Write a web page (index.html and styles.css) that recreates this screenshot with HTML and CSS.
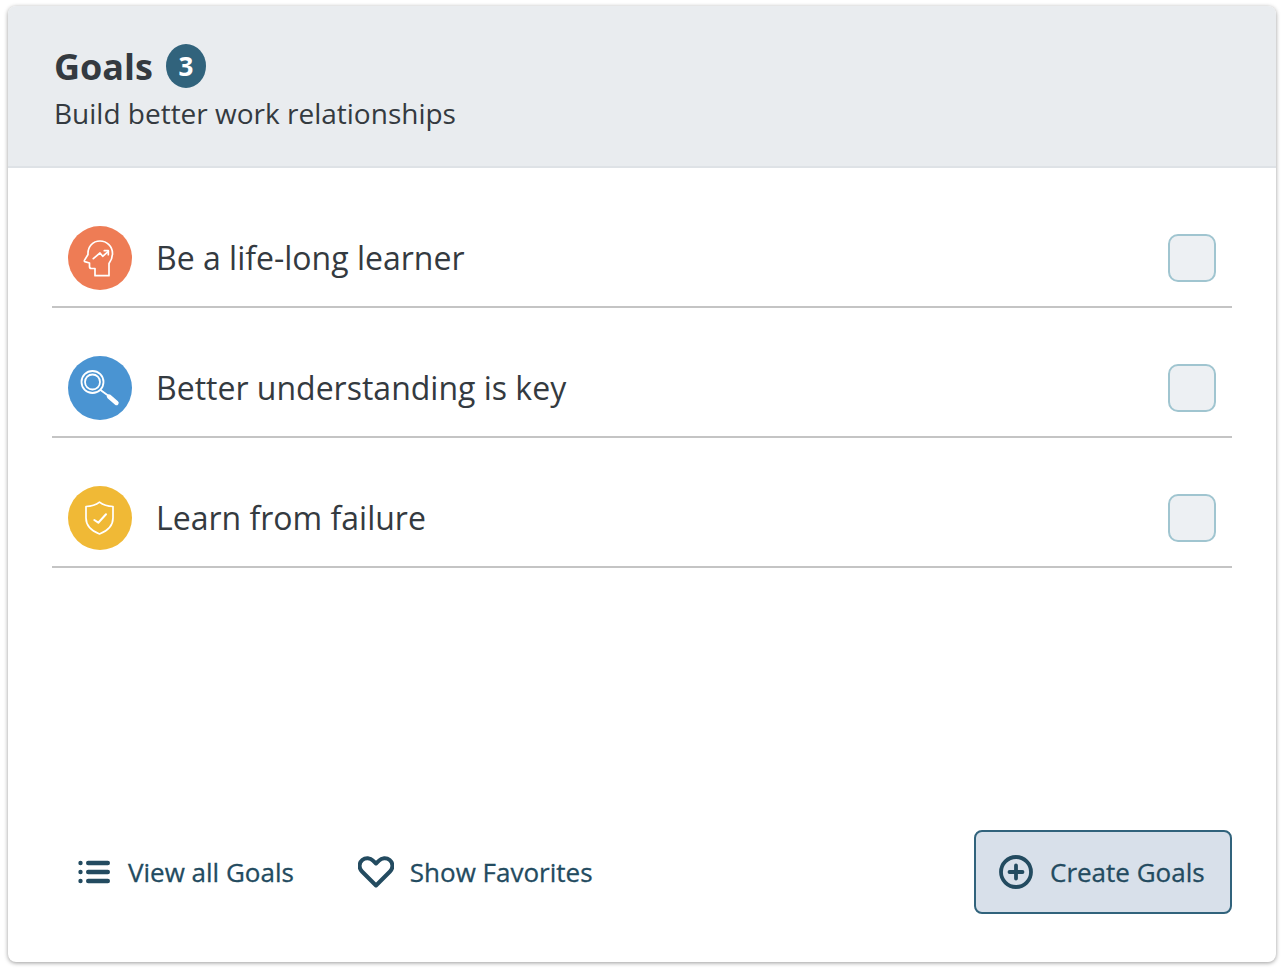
FILE: index.html
```html
<!DOCTYPE html>
<html lang="en">

<head>
    <meta charset="UTF-8" />
    <meta name="viewport" content="width=device-width, initial-scale=1.0" />
    <title>Goals</title>
    <link rel="stylesheet" href="styles.css">
</head>

<body>
    <div class="goals-card">
        <div class="goals-header">
            <div class="goals-title-row">
                <h2 class="goals-title">Goals</h2>
                <span class="goals-count">3</span>
            </div>
            <div class="goals-subtitle">Build better work relationships</div>
        </div>

        <ul class="goals-list">
            <li class="goal-row">
                <span class="goal-icon orange">
                    <svg width="36" height="38" viewBox="0 0 36 38" fill="none" stroke="#fff" stroke-width="1.700" stroke-linejoin="round" stroke-linecap="round">
                        <path d="M13 36.700V29.500H9.500a2 2 0 0 1-2-2V24l-4.700-1.400a.8.800 0 0 1-.4-1.200L6 15.500C5.500 7.500 11 2 18 2 25 2 30.500 7.500 30.500 14.500c0 4.500-1.700 7.500-3.500 10v12.200z" />
                        <path d="M11.300 19.700L18 14l2.700 3.300 5.600-5" />
                        <path d="M22.300 11.700h4v4" />
                    </svg>
                </span>
                <span class="goal-name">Be a life-long learner</span>
                <span class="goal-check"></span>
            </li>
            <li class="goal-row">
                <span class="goal-icon blue">
                    <svg width="40" height="40" viewBox="0 0 40 40" fill="none" stroke="#fff" stroke-linecap="round">
                        <circle cx="12.500" cy="14" r="11" stroke-width="1.800" />
                        <circle cx="12.500" cy="14" r="7.500" stroke-width="1.800" />
                        <path d="M20.500 22l7.500 5.500" stroke-width="1.800" />
                        <path d="M29 28.500l7.500 6.500" stroke-width="4.400" />
                    </svg>
                </span>
                <span class="goal-name">Better understanding is key</span>
                <span class="goal-check"></span>
            </li>
            <li class="goal-row">
                <span class="goal-icon yellow">
                    <svg width="36" height="36" viewBox="0 0 36 36" fill="none" stroke="#fff" stroke-width="1.700" stroke-linejoin="round" stroke-linecap="round">
                        <path d="M17.500 2.200C21 5 26 6.500 31 6.500V18c0 8-6 13-13.500 16C10 31 4 26 4 18V6.500C9 6.500 14 5 17.500 2.200z" />
                        <path d="M12.300 20l4 2.700 7.700-8.400" stroke-width="2" />
                    </svg>
                </span>
                <span class="goal-name">Learn from failure</span>
                <span class="goal-check"></span>
            </li>
        </ul>

        <div class="goals-footer">
            <a class="footer-link list-link" href="#">
                <svg width="32" height="24" viewBox="0 0 32 24" fill="#234b60">
                    <circle cx="2.500" cy="3" r="2.200" />
                    <circle cx="2.500" cy="12" r="2.200" />
                    <circle cx="2.500" cy="21" r="2.200" />
                    <rect x="8" y=".8" width="24" height="4.400" rx="2.200" />
                    <rect x="8" y="9.800" width="24" height="4.400" rx="2.200" />
                    <rect x="8" y="18.800" width="24" height="4.400" rx="2.200" />
                </svg>
                View all Goals
            </a>
            <a class="footer-link heart-link" href="#">
                <svg width="36" height="32" viewBox="0 0 36 32" fill="none" stroke="#234b60" stroke-width="4" stroke-linejoin="round">
                    <path d="M18 29.500L4 15.500C.5 12 1 6.800 4.300 4c3.300-2.700 8-2.200 10.700.6L18 7.500l3-2.900c2.700-2.800 7.400-3.300 10.700-.6C35 6.800 35.500 12 32 15.500z" />
                </svg>
                Show Favorites
            </a>
            <button class="create-button">
                <svg width="34" height="34" viewBox="0 0 34 34" fill="none" stroke="#234b60" stroke-linecap="round">
                    <circle cx="17" cy="17" r="15" stroke-width="3.800" />
                    <path d="M17 10.500v13M10.500 17h13" stroke-width="3.800" />
                </svg>
                Create Goals
            </button>
        </div>
    </div>
</body>

</html>
```

FILE: styles.css
```css
body {
    font-family: "Open Sans", Arial, sans-serif;
    margin: 0;
    padding: 6px 8px 10px 8px;
    background-color: white;
    color: #343a40;
}

.goals-card {
    height: 956px;
    display: flex;
    flex-direction: column;
    box-sizing: border-box;
    background-color: white;
    border-radius: 8px;
    box-shadow: 0 1px 4px rgba(0, 0, 0, 0.4);
    overflow: hidden;
}

.goals-header {
    box-sizing: border-box;
    height: 162px;
    padding: 37px 47px 0 46px;
    background-color: #e9ecef;
    border-bottom: 2px solid #dee2e6;
}

.goals-title-row {
    display: flex;
    align-items: center;
    gap: 13px;
    height: 48px;
}

.goals-title {
    margin: 0;
    font-size: 36px;
    font-weight: 700;
    line-height: 48px;
}

.goals-count {
    width: 40px;
    height: 44px;
    margin-top: -2px;
    border-radius: 20px / 22px;
    background-color: #31637c;
    color: white;
    font-size: 26px;
    font-weight: 700;
    line-height: 44px;
    text-align: center;
}

.goals-subtitle {
    font-size: 28px;
    line-height: 44px;
}

.goals-list {
    list-style: none;
    margin: 0;
    padding: 10px 44px 0 44px;
}

.goal-row {
    display: flex;
    align-items: center;
    padding: 48px 16px 16px 16px;
    border-bottom: 2px solid #c4c4c4;
}

.goal-icon {
    flex: none;
    width: 64px;
    height: 64px;
    border-radius: 50%;
    display: flex;
    align-items: center;
    justify-content: center;
}

.goal-icon.orange {
    background-color: #ee7c55;
}

.goal-icon.blue {
    background-color: #4a94d2;
}

.goal-icon.yellow {
    background-color: #f0b936;
}

.goal-name {
    flex: 1;
    margin-left: 24px;
    font-size: 32px;
    line-height: 44px;
}

.goal-check {
    flex: none;
    box-sizing: border-box;
    width: 48px;
    height: 48px;
    border: 2px solid #a0c5d0;
    border-radius: 10px;
    background-color: #edf0f3;
}

.goals-footer {
    margin-top: auto;
    display: flex;
    align-items: center;
    padding: 0 44px 48px 44px;
}

.footer-link {
    display: flex;
    align-items: center;
    color: #234b60;
    font-size: 26px;
    -webkit-text-stroke: 0.3px #234b60;
    text-decoration: none;
}

.list-link {
    margin-left: 26px;
    gap: 18px;
}

.heart-link {
    margin-left: 64px;
    gap: 16px;
}

.create-button {
    margin-left: auto;
    box-sizing: border-box;
    width: 258px;
    height: 84px;
    padding: 0 0 0 23px;
    display: flex;
    align-items: center;
    gap: 17px;
    font-family: inherit;
    font-size: 26px;
    -webkit-text-stroke: 0.3px #234b60;
    color: #234b60;
    background-color: #d8e0ea;
    border: 2px solid #31637c;
    border-radius: 8px;
}
```
